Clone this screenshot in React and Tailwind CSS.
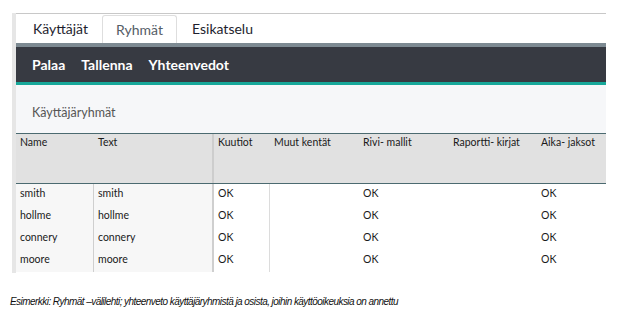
import React from "react";

const cols = [
  { key: "name", label: "Name", w: "w-[78px]" },
  { key: "text", label: "Text", w: "w-[120px]" },
  { key: "kuutiot", label: "Kuutiot", w: "w-[56px]" },
  { key: "muut", label: "Muut kentät", w: "w-[89px]" },
  { key: "rivi", label: "Rivi- mallit", w: "w-[90px]" },
  { key: "raportti", label: "Raportti- kirjat", w: "w-[88px]" },
  { key: "aika", label: "Aika- jaksot", w: "w-[69px]" },
];

const rows = [
  { name: "smith", text: "smith", kuutiot: "OK", rivi: "OK", aika: "OK" },
  { name: "hollme", text: "hollme", kuutiot: "OK", rivi: "OK", aika: "OK" },
  { name: "connery", text: "connery", kuutiot: "OK", rivi: "OK", aika: "OK" },
  { name: "moore", text: "moore", kuutiot: "OK", rivi: "OK", aika: "OK" },
];

// cell look per column in the body rows
const bodyCell = [
  "bg-[#f7f7f7] border-r border-[#cfcfcf]",
  "bg-[#f7f7f7] border-r-2 border-[#cfcfcf]",
  "bg-white border-r border-[#dcdcdc]",
  "bg-white",
  "bg-white",
  "bg-white",
  "bg-white",
];

const App = () => {
  return (
    <div className="w-[634px] h-[315px] bg-white pt-[13px] font-['Lato',sans-serif]">
      <div className="flex ml-3 w-[594px]">
        {/* left strip */}
        <div className="w-1 h-[260px] bg-[#e6e6e6]"></div>

        <div className="flex-1 flex flex-col">
          {/* Tabs */}
          <div className="h-[30px] border-t border-[#c8c8c8] flex items-end text-[14px] leading-none">
            <div className="h-[28px] pl-[17px] pr-[14px] flex items-center text-[#1e1e2e]">Käyttäjät</div>
            <div className="h-[28px] px-[13px] flex items-center text-[#555d66] border border-b-0 border-[#dedede] rounded-t-[3px]">
              Ryhmät
            </div>
            <div className="h-[28px] pl-[15px] flex items-center text-[#1e1e2e]">Esikatselu</div>
          </div>
          <div className="h-1 bg-[#7d8a92]"></div>

          {/* Toolbar */}
          <div className="h-[35px] bg-[#373a42] flex items-center gap-4 pl-4 text-white font-bold text-[14px]">
            <span>Palaa</span>
            <span>Tallenna</span>
            <span>Yhteenvedot</span>
          </div>
          <div className="h-[3px] bg-[#17a89a]"></div>

          {/* Section title */}
          <div className="h-[48px] bg-[#f6f7f9] pl-4 pt-[19px] text-[12.5px] text-[#555] leading-[18px]">
            Käyttäjäryhmät
          </div>

          {/* Table */}
          <div className="text-[10.5px] text-[#1a1a1a]">
            <div className="flex h-[51px] bg-[#e1e1e1] border-y border-[#4b6a70]">
              {cols.map((c, i) => (
                <div
                  key={c.key}
                  className={`${c.w} pl-1 pt-[1px] leading-[14px] ${i === 1 ? "border-r-2 border-[#cdcdcd]" : ""}`}
                >
                  {c.label}
                </div>
              ))}
            </div>
            {rows.map((r) => (
              <div key={r.name} className="flex h-[22px]">
                {cols.map((c, i) => (
                  <div key={c.key} className={`${c.w} pl-1 pt-[1px] leading-[16px] ${bodyCell[i]}`}>
                    {r[c.key] || ""}
                  </div>
                ))}
              </div>
            ))}
          </div>
        </div>
      </div>

      <p className="mt-[21px] ml-[10px] italic text-[10px] text-[#111] font-['Liberation_Sans',Arial,sans-serif] tracking-[-0.55px]">
        Esimerkki: Ryhmät –välilehti; yhteenveto käyttäjäryhmistä ja osista, joihin käyttöoikeuksia on annettu
      </p>
    </div>
  );
};

export default App;
